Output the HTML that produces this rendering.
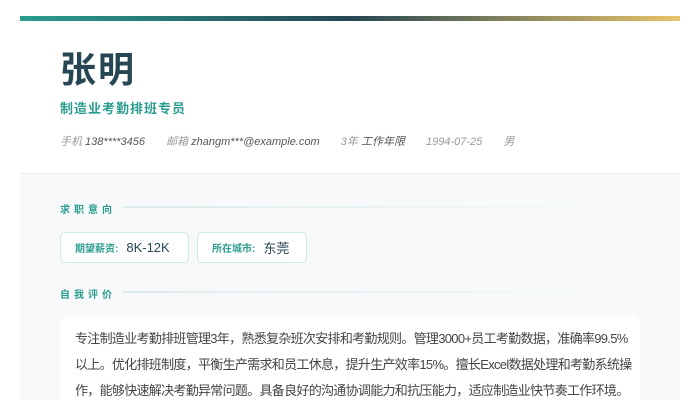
<!DOCTYPE html>
<html><head><meta charset="utf-8"><style>
*{margin:0;padding:0;box-sizing:border-box}
html,body{width:700px;height:400px;overflow:hidden}
body{background:#fff;font-family:"Liberation Sans","Noto Sans CJK SC",sans-serif;position:relative}
.bar{position:absolute;left:20px;top:16px;width:660px;height:5px;background:linear-gradient(90deg,#2a9d8f 0%,#264653 50%,#e9c46a 100%)}
.head{position:absolute;left:20px;top:21px;width:660px;height:153px;background:#fff;border-bottom:1px solid #e8ecee}
.body{position:absolute;left:20px;top:174px;width:660px;height:226px;background:#f7f9fa}
.name{position:absolute;left:60px;top:47px;font-size:36px;font-weight:bold;color:#264653;letter-spacing:2px;line-height:46px}
.title{position:absolute;left:60px;top:98px;font-size:13px;font-weight:bold;color:#2a9d8f;letter-spacing:1px}
.meta{position:absolute;left:60px;top:133px;font-size:11px;font-style:italic;color:#555;white-space:nowrap}
.meta span{margin-right:18px}.meta i{color:#999}
.sec{position:absolute;left:60px;font-size:10px;font-weight:bold;color:#2a9d8f;letter-spacing:4px}
.line{position:absolute;left:123px;width:480px;height:2px;background:linear-gradient(90deg,#dcecea,rgba(220,236,234,0))}
.tag{position:absolute;top:232px;height:31px;background:#fff;border:1px solid #cdeae6;border-radius:5px;display:flex;align-items:center;padding-left:14px;white-space:nowrap}
.tag b{font-size:10px;color:#2a9d8f;margin-right:8px}.tag span{font-size:13px;color:#264653}
.card{position:absolute;left:60px;top:316px;width:580px;height:100px;background:#fff;border-radius:7px;padding:10px 0 0 15px;font-size:13px;line-height:26px;color:#444;letter-spacing:-0.7px;white-space:nowrap}
</style></head><body>
<div class="bar"></div><div class="head"></div><div class="body"></div>
<div class="name">张明</div>
<div class="title">制造业考勤排班专员</div>
<div class="meta"><span><i>手机</i> 138****3456</span> <span><i>邮箱</i> zhangm***@example.com</span> <span><i>3年</i> 工作年限</span> <span><i>1994-07-25</i></span> <span><i>男</i></span></div>
<div class="sec" style="top:201px">求职意向</div><div class="line" style="top:206px"></div>
<div class="tag" style="left:60px;width:129px"><b>期望薪资:</b><span>8K-12K</span></div>
<div class="tag" style="left:197px;width:110px"><b>所在城市:</b><span>东莞</span></div>
<div class="sec" style="top:286px">自我评价</div><div class="line" style="top:291px"></div>
<div class="card">专注制造业考勤排班管理3年，熟悉复杂班次安排和考勤规则。管理3000+员工考勤数据，准确率99.5%<br>以上。优化排班制度，平衡生产需求和员工休息，提升生产效率15%。擅长Excel数据处理和考勤系统操<br>作，能够快速解决考勤异常问题。具备良好的沟通协调能力和抗压能力，适应制造业快节奏工作环境。</div>
</body></html>
